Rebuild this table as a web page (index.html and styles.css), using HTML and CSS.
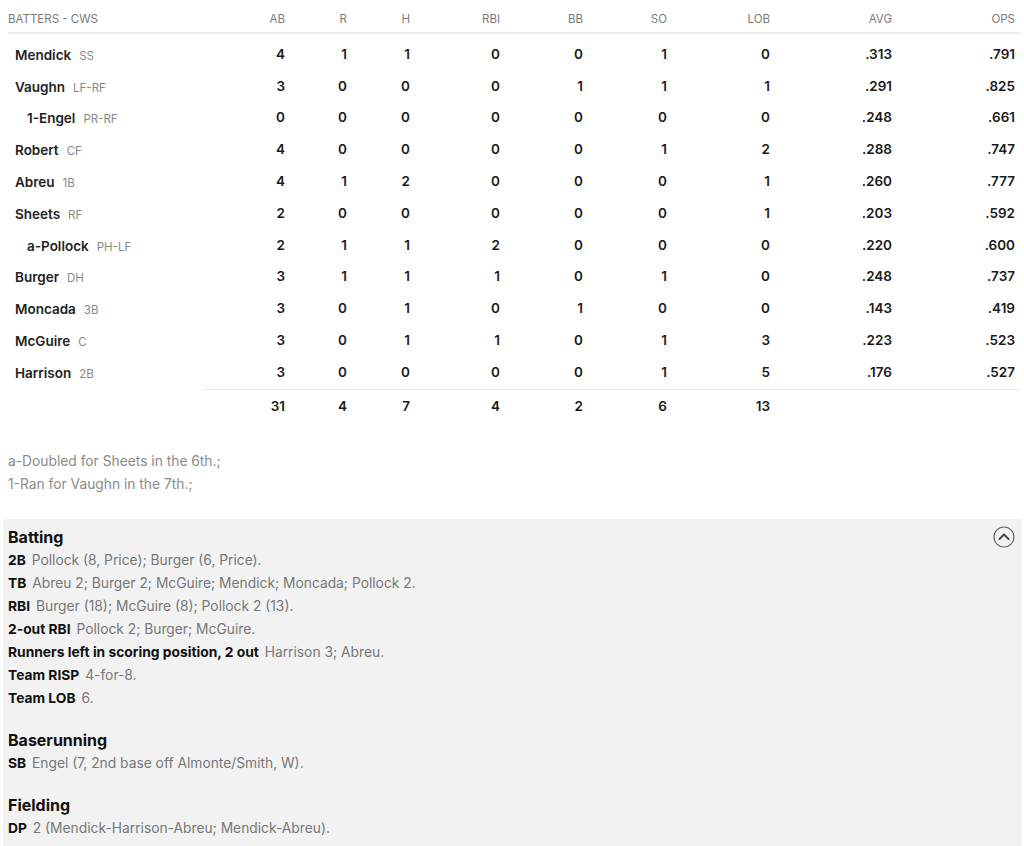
FILE: index.html
```html
<!DOCTYPE html>
<html>
<head>
<meta charset="utf-8">
<link rel="stylesheet" href="styles.css">
</head>
<body>
<div class="box">
  <div class="row head">
    <div class="name">BATTERS - CWS</div>
    <div class="c ab">AB</div><div class="c r">R</div><div class="c h">H</div><div class="c rbi">RBI</div><div class="c bb">BB</div><div class="c so">SO</div><div class="c lob">LOB</div><div class="c avg">AVG</div><div class="c ops">OPS</div>
  </div>
  <div class="body">
    <div class="row"><div class="name"><b>Mendick</b><span class="pos">SS</span></div><div class="c">4</div><div class="c">1</div><div class="c">1</div><div class="c">0</div><div class="c">0</div><div class="c">1</div><div class="c">0</div><div class="c">.313</div><div class="c">.791</div></div>
    <div class="row"><div class="name"><b>Vaughn</b><span class="pos">LF-RF</span></div><div class="c">3</div><div class="c">0</div><div class="c">0</div><div class="c">0</div><div class="c">1</div><div class="c">1</div><div class="c">1</div><div class="c">.291</div><div class="c">.825</div></div>
    <div class="row"><div class="name sub"><b>1-Engel</b><span class="pos">PR-RF</span></div><div class="c">0</div><div class="c">0</div><div class="c">0</div><div class="c">0</div><div class="c">0</div><div class="c">0</div><div class="c">0</div><div class="c">.248</div><div class="c">.661</div></div>
    <div class="row"><div class="name"><b>Robert</b><span class="pos">CF</span></div><div class="c">4</div><div class="c">0</div><div class="c">0</div><div class="c">0</div><div class="c">0</div><div class="c">1</div><div class="c">2</div><div class="c">.288</div><div class="c">.747</div></div>
    <div class="row"><div class="name"><b>Abreu</b><span class="pos">1B</span></div><div class="c">4</div><div class="c">1</div><div class="c">2</div><div class="c">0</div><div class="c">0</div><div class="c">0</div><div class="c">1</div><div class="c">.260</div><div class="c">.777</div></div>
    <div class="row"><div class="name"><b>Sheets</b><span class="pos">RF</span></div><div class="c">2</div><div class="c">0</div><div class="c">0</div><div class="c">0</div><div class="c">0</div><div class="c">0</div><div class="c">1</div><div class="c">.203</div><div class="c">.592</div></div>
    <div class="row"><div class="name sub"><b>a-Pollock</b><span class="pos">PH-LF</span></div><div class="c">2</div><div class="c">1</div><div class="c">1</div><div class="c">2</div><div class="c">0</div><div class="c">0</div><div class="c">0</div><div class="c">.220</div><div class="c">.600</div></div>
    <div class="row"><div class="name"><b>Burger</b><span class="pos">DH</span></div><div class="c">3</div><div class="c">1</div><div class="c">1</div><div class="c">1</div><div class="c">0</div><div class="c">1</div><div class="c">0</div><div class="c">.248</div><div class="c">.737</div></div>
    <div class="row"><div class="name"><b>Moncada</b><span class="pos">3B</span></div><div class="c">3</div><div class="c">0</div><div class="c">1</div><div class="c">0</div><div class="c">1</div><div class="c">0</div><div class="c">0</div><div class="c">.143</div><div class="c">.419</div></div>
    <div class="row"><div class="name"><b>McGuire</b><span class="pos">C</span></div><div class="c">3</div><div class="c">0</div><div class="c">1</div><div class="c">1</div><div class="c">0</div><div class="c">1</div><div class="c">3</div><div class="c">.223</div><div class="c">.523</div></div>
    <div class="row"><div class="name"><b>Harrison</b><span class="pos">2B</span></div><div class="c">3</div><div class="c">0</div><div class="c">0</div><div class="c">0</div><div class="c">0</div><div class="c">1</div><div class="c">5</div><div class="c">.176</div><div class="c">.527</div></div>
  </div>
  <div class="row total"><div class="name"></div><div class="c">31</div><div class="c">4</div><div class="c">7</div><div class="c">4</div><div class="c">2</div><div class="c">6</div><div class="c">13</div><div class="c"></div><div class="c"></div></div>
</div>

<div class="notes">
  <p>a-Doubled for Sheets in the 6th.;</p>
  <p>1-Ran for Vaughn in the 7th.;</p>
</div>

<div class="info">
  <button class="toggle" aria-label="Collapse">
    <svg width="22" height="22" viewBox="0 0 22 22"><circle cx="11" cy="11" r="10" fill="none" stroke="#666" stroke-width="1.2"/><path d="M6.5 13 L11 8.5 L15.5 13" fill="none" stroke="#444" stroke-width="1.8" stroke-linecap="round" stroke-linejoin="round"/></svg>
  </button>
  <section>
    <h3>Batting</h3>
    <p><b>2B</b> Pollock (8, Price); Burger (6, Price).</p>
    <p><b>TB</b> Abreu 2; Burger 2; McGuire; Mendick; Moncada; Pollock 2.</p>
    <p><b>RBI</b> Burger (18); McGuire (8); Pollock 2 (13).</p>
    <p><b>2-out RBI</b> Pollock 2; Burger; McGuire.</p>
    <p><b>Runners left in scoring position, 2 out</b> Harrison 3; Abreu.</p>
    <p><b>Team RISP</b> 4-for-8.</p>
    <p><b>Team LOB</b> 6.</p>
  </section>
  <section>
    <h3>Baserunning</h3>
    <p><b>SB</b> Engel (7, 2nd base off Almonte/Smith, W).</p>
  </section>
  <section>
    <h3>Fielding</h3>
    <p><b>DP</b> 2 (Mendick-Harrison-Abreu; Mendick-Abreu).</p>
  </section>
</div>
</body>
</html>
```
FILE: styles.css
```css
* { box-sizing: border-box; }
body {
  margin: 0;
  font-family: "Inter", "Liberation Sans", sans-serif;
  color: #111;
  background: #fff;
}
.box { padding: 0 4px 0 8px; }
.row {
  display: grid;
  grid-template-columns: 186px 91px 62px 63px 90px 83px 84px 103px 122px 123px;
  align-items: center;
  height: 31.8px;
}
.row .c { text-align: right; font-size: 13.5px; font-weight: 600; color: #1a1a1a; }
.head {
  height: 34px;
  padding-top: 5px;
  border-bottom: 2px solid #ececec;
}
.head .name, .head .c {
  font-size: 11.5px;
  color: #7a7a7a;
  font-weight: 400;
}
.body { padding-top: 4px; }
.name { padding-left: 7px; white-space: nowrap; }
.head .name { padding-left: 0; }
.name b { font-size: 13.5px; font-weight: 600; color: #222; }
.name.sub { padding-left: 19px; }
.pos { font-size: 11.5px; color: #888; margin-left: 8px; }
.total {
  margin-left: 195px;
  grid-template-columns: 0 82px 62px 63px 90px 83px 84px 103px 122px 123px;
  border-top: 1px solid #e8e8e8;
  height: 33px;
  margin-top: 1px;
}
.notes { margin-top: 28px; padding-left: 8px; }
.notes p { margin: 0; font-size: 13.8px; line-height: 23px; color: #8a8a8a; }
.info {
  position: relative;
  margin: 23px 2px 0 3px;
  background: #f2f2f2;
  padding: 7px 5px 10px 5px;
}
.toggle {
  position: absolute;
  right: 7px;
  top: 7px;
  border: 0;
  background: none;
  padding: 0;
  width: 22px;
  height: 22px;
}
.info section + section { margin-top: 19px; }
.info h3 { margin: 0; font-size: 16px; line-height: 23px; font-weight: 700; color: #111; }
.info p { margin: 0; font-size: 13.8px; line-height: 23px; color: #777; }
.info p b { color: #111; font-weight: 700; margin-right: 2px; }
```
